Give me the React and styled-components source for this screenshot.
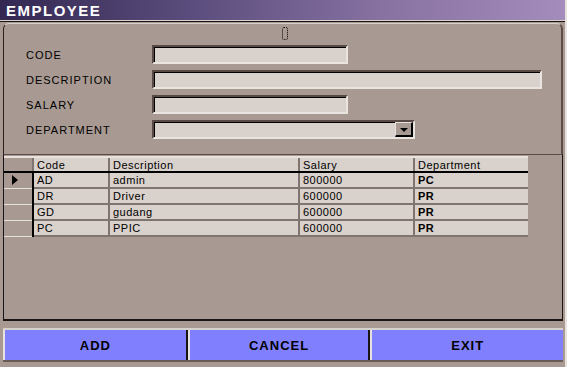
import styled, { createGlobalStyle } from 'styled-components';

const GlobalStyle = createGlobalStyle`
	html, body {
		margin: 0;
		padding: 0;
		background: #a89a92;
	}
	* {
		box-sizing: border-box;
	}
`;

const rows = [
	{ code: 'AD', description: 'admin', salary: '800000', department: 'PC', current: true },
	{ code: 'DR', description: 'Driver', salary: '600000', department: 'PR' },
	{ code: 'GD', description: 'gudang', salary: '600000', department: 'PR' },
	{ code: 'PC', description: 'PPIC', salary: '600000', department: 'PR' },
];

const columns = [
	{ key: 'code', title: 'Code', width: 76 },
	{ key: 'description', title: 'Description', width: 190 },
	{ key: 'salary', title: 'Salary', width: 115 },
	{ key: 'department', title: 'Department', width: 114 },
];

const Window = styled.div`
	width: 567px;
	height: 367px;
	display: flex;
	flex-direction: column;
	background: #a89a92;
	border-right: 2px solid #e8e2de;
	font-family: 'Liberation Sans', Arial, sans-serif;
	overflow: hidden;
`;

const TitleBar = styled.div`
	height: 21px;
	flex-shrink: 0;
	display: flex;
	align-items: center;
	padding-left: 6px;
	background: linear-gradient(to right, #332852 0%, #5c4e7e 35%, #8a74a4 70%, #a48cbc 100%);
	border-bottom: 1px solid #d8d0ca;
	color: #fff;
	font-size: 15px;
	font-weight: bold;
	letter-spacing: 1.5px;
`;

const Body = styled.div`
	flex: 1;
	display: flex;
	flex-direction: column;
	padding: 1px 2px 0 3px;
	border-top: 1px solid #1a1414;
`;

const FormPanel = styled.div`
	position: relative;
	height: 131px;
	flex-shrink: 0;
	border-left: 1px solid #2a2020;
	border-top: 1px solid #d8d0ca;
	border-right: 2px solid #5c4c48;
	border-radius: 6px 6px 0 0;
	display: flex;
	flex-direction: column;
	gap: 6px;
	padding: 21px 0 0 22px;
`;

const Marker = styled.div`
	position: absolute;
	top: 3px;
	left: 278px;
	width: 6px;
	height: 13px;
	border: 1px dotted #000;
	border-radius: 2px;
`;

const FieldRow = styled.div`
	display: flex;
	align-items: center;
	height: 19px;
`;

const Label = styled.label`
	width: 126px;
	font-size: 11px;
	letter-spacing: 1px;
	color: #000;
`;

const Input = styled.div`
	width: ${(p) => p.$w}px;
	height: 19px;
	background: #d9d1cb;
	border-top: 2px solid #5a4a46;
	border-left: 2px solid #5a4a46;
	border-bottom: 2px solid #eae4e0;
	border-right: 2px solid #eae4e0;
	box-shadow: inset 1px 1px 0 #000;
	display: flex;
	justify-content: flex-end;
`;

const DropButton = styled.div`
	width: 18px;
	height: 100%;
	background: #a89a92;
	border-top: 1px solid #e8e2de;
	border-left: 1px solid #e8e2de;
	border-right: 2px solid #000;
	border-bottom: 2px solid #000;
	display: flex;
	align-items: center;
	justify-content: center;
`;

const Arrow = styled.div`
	width: 0;
	height: 0;
	border-left: 4px solid transparent;
	border-right: 4px solid transparent;
	border-top: 4px solid #000;
	margin-top: 2px;
`;

const GridArea = styled.div`
	height: 167px;
	flex-shrink: 0;
	border-left: 1px solid #1a1414;
	border-top: 1px solid #5c4c48;
	border-right: 1px solid #1a1414;
	border-bottom: 2px solid #1a1414;
	padding-top: 1px;
`;

const Table = styled.table`
	border-collapse: collapse;
	font-size: 11px;
	letter-spacing: 0.5px;
	color: #000;
`;

const HeadCell = styled.th`
	width: ${(p) => p.$w}px;
	height: 15px;
	padding: 0 3px;
	text-align: left;
	font-weight: normal;
	background: #d9d1cb;
	border-left: 2px solid #807470;
	border-top: 2px solid #e8e2de;
	border-bottom: 2px solid #000;
	line-height: 12px;
`;

const IndicatorHead = styled.th`
	width: 29px;
	padding: 0;
	background: #a89a92;
	border-top: 2px solid #e8e2de;
	border-bottom: 2px solid #000;
`;

const Indicator = styled.td`
	width: 29px;
	height: 16px;
	padding: 0 0 0 8px;
	background: #a89a92;
	border-bottom: 1px solid #e8e2de;
	border-right: 2px solid #000;
`;

const Pointer = styled.div`
	width: 0;
	height: 0;
	border-top: 5px solid transparent;
	border-bottom: 5px solid transparent;
	border-left: 6px solid #000;
`;

const Cell = styled.td`
	padding: 0 3px;
	height: 16px;
	background: #d9d1cb;
	border-left: 2px solid #807470;
	border-bottom: 2px solid #807470;
	line-height: 12px;
	font-weight: ${(p) => (p.$bold ? 'bold' : 'normal')};
	white-space: nowrap;
`;

const ButtonBar = styled.div`
	margin-top: 7px;
	height: 34px;
	display: flex;
	gap: 2px;
	background: #1a1414;
	border-top: 2px solid #d8d0ca;
	border-bottom: 2px solid #6a5a56;
`;

const Button = styled.button`
	flex: ${(p) => p.$w};
	border: none;
	border-left: 2px solid #e8e2de;
	background: #8080ff;
	font-family: 'Liberation Sans', Arial, sans-serif;
	font-size: 13px;
	font-weight: bold;
	letter-spacing: 1px;
	color: #000;
	padding: 0;
`;

export default function App() {
	return (
		<>
			<GlobalStyle />
			<Window>
				<TitleBar>EMPLOYEE</TitleBar>
				<Body>
					<FormPanel>
						<Marker />
						<FieldRow>
							<Label>CODE</Label>
							<Input $w={196} />
						</FieldRow>
						<FieldRow>
							<Label>DESCRIPTION</Label>
							<Input $w={390} />
						</FieldRow>
						<FieldRow>
							<Label>SALARY</Label>
							<Input $w={196} />
						</FieldRow>
						<FieldRow>
							<Label>DEPARTMENT</Label>
							<Input $w={263}>
								<DropButton>
									<Arrow />
								</DropButton>
							</Input>
						</FieldRow>
					</FormPanel>
					<GridArea>
						<Table>
							<thead>
								<tr>
									<IndicatorHead />
									{columns.map((c) => (
										<HeadCell key={c.key} $w={c.width}>
											{c.title}
										</HeadCell>
									))}
								</tr>
							</thead>
							<tbody>
								{rows.map((r) => (
									<tr key={r.code}>
										<Indicator>{r.current && <Pointer />}</Indicator>
										{columns.map((c) => (
											<Cell key={c.key} $bold={c.key === 'department'}>
												{r[c.key]}
											</Cell>
										))}
									</tr>
								))}
							</tbody>
						</Table>
					</GridArea>
					<ButtonBar>
						<Button $w={183}>ADD</Button>
						<Button $w={181}>CANCEL</Button>
						<Button $w={193}>EXIT</Button>
					</ButtonBar>
				</Body>
			</Window>
		</>
	);
}
